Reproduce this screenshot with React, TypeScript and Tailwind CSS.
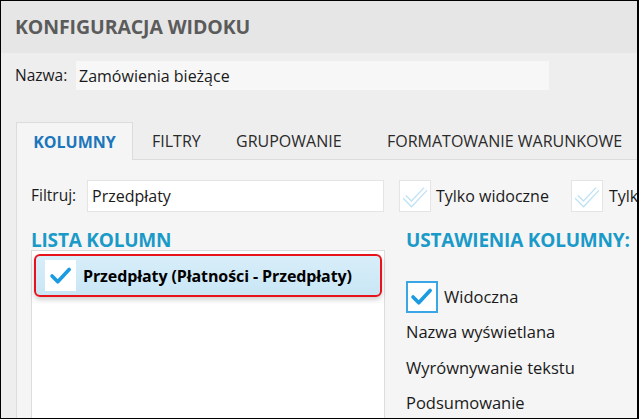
import React from "react";

const font = { fontFamily: '"Open Sans", "Noto Sans", sans-serif' };

const CheckMark = ({ faded = false }: { faded?: boolean }) =>
  faded ? (
    <svg viewBox="0 0 32 32" className="h-[28px] w-[28px]">
      <path d="M4 17 L12 25 L28 8" fill="none" stroke="#bfe2f4" strokeWidth="6" strokeLinejoin="miter" />
      <path d="M4 17 L12 25 L28 8" fill="none" stroke="#ffffff" strokeWidth="3" strokeLinejoin="miter" />
    </svg>
  ) : (
    <svg viewBox="0 0 32 32" className="h-[26px] w-[26px]">
      <path d="M5 16 L12 23 L26 8" fill="none" stroke="#1b9be2" strokeWidth="4.5" strokeLinecap="round" strokeLinejoin="round" />
    </svg>
  );

const FadedCheckbox = () => (
  <div className="flex h-[32px] w-[32px] shrink-0 items-center justify-center border border-[#e4e4e4] bg-white">
    <CheckMark faded />
  </div>
);

export default function App() {
  const tabs = [
    { label: "FILTRY", w: "w-[84px]" },
    { label: "GRUPOWANIE", w: "w-[151px]" },
    { label: "FORMATOWANIE WARUNKOWE", w: "w-[260px]" },
  ];
  const settings = ["Nazwa wyświetlana", "Wyrównywanie tekstu", "Podsumowanie"];

  return (
    <div
      style={font}
      className="flex h-[419px] w-[639px] flex-col overflow-hidden border border-r-2 border-black bg-[#eeeeee] text-[#1a1a1a]"
    >
      <div className="flex h-[52px] shrink-0 items-center bg-[#e6e6e6] pl-[14px]">
        <h1 className="text-[19.5px] font-bold tracking-[-0.1px] text-[#5b5b5b]">KONFIGURACJA WIDOKU</h1>
      </div>

      <div className="mt-[8px] flex items-center pl-[14px]">
        <span className="w-[61px] shrink-0 text-[15.5px]">Nazwa:</span>
        <div className="flex h-[29px] w-[473px] shrink-0 items-center bg-[#f7f7f7] pl-[3px] text-[16px]">
          Zamówienia bieżące
        </div>
      </div>

      <div className="mt-[32px] flex items-end pl-[15px]">
        <div className="flex h-[38px] w-[117px] shrink-0 items-center justify-center border border-b-0 border-[#dcdcdc] bg-[#f5f5f5] text-[16px] font-bold text-[#1b76bb]">
          KOLUMNY
        </div>
        <div className="flex h-[37px] flex-1 items-center border-b border-[#dcdcdc] pl-[19px] text-[16px] text-[#2a2a2a]">
          {tabs.map((t) => (
            <span key={t.label} className={`${t.w} shrink-0 whitespace-nowrap`}>
              {t.label}
            </span>
          ))}
        </div>
      </div>

      <div className="ml-[15px] flex flex-1 flex-col border-l border-[#dcdcdc] bg-[#f5f5f5] pl-[14px]">
        <div className="mt-[20px] flex items-center">
          <span className="w-[56px] shrink-0 text-[15.5px]">Filtruj:</span>
          <div className="flex h-[32px] w-[297px] shrink-0 items-center border border-[#e4e4e4] bg-white pl-[4px] text-[16px]">
            Przedpłaty
          </div>
          <div className="ml-[15px] flex shrink-0 items-center">
            <FadedCheckbox />
            <span className="ml-[5px] whitespace-nowrap text-[16px]">Tylko widoczne</span>
          </div>
          <div className="ml-[22px] flex shrink-0 items-center">
            <FadedCheckbox />
            <span className="ml-[6px] whitespace-nowrap text-[16px]">Tylko zaznaczone</span>
          </div>
        </div>

        <div className="mt-[17px] flex flex-1 gap-[21px]">
          <div className="flex w-[354px] shrink-0 flex-col">
            <h2 className="text-[19px] font-bold leading-[22px] tracking-[-0.2px] text-[#1a9ac8]">LISTA KOLUMN</h2>
            <div className="mt-[-1px] flex-1 border-t border-l border-r border-[#dcdcdc] bg-white px-[2px] pt-[3px]">
              <div className="flex h-[43px] items-center rounded-[6px] border-2 border-[#e8131a] bg-[linear-gradient(180deg,#d8eef9,#c9e6f5)] pl-[9px] shadow-[0_3px_5px_rgba(0,0,0,0.18)]">
                <div className="flex h-[31px] w-[31px] items-center justify-center bg-white">
                  <CheckMark />
                </div>
                <span className="ml-[7px] whitespace-nowrap text-[16px] font-bold tracking-[-0.1px] text-black">
                  Przedpłaty (Płatności - Przedpłaty)
                </span>
              </div>
            </div>
          </div>

          <div className="flex shrink-0 flex-col">
            <h2 className="whitespace-nowrap text-[19px] font-bold leading-[22px] tracking-[-0.2px] text-[#1a9ac8]">
              USTAWIENIA KOLUMNY:
            </h2>
            <div className="mt-[30px] flex items-center">
              <div className="flex h-[32px] w-[32px] items-center justify-center border-2 border-[#3ba6e6] bg-white">
                <CheckMark />
              </div>
              <span className="ml-[6px] text-[16.5px]">Widoczna</span>
            </div>
            <div className="mt-[2px] flex flex-col">
              {settings.map((s) => (
                <div key={s} className="flex h-[35.5px] items-center whitespace-nowrap text-[16.5px]">
                  {s}
                </div>
              ))}
            </div>
          </div>
        </div>
      </div>
    </div>
  );
}
